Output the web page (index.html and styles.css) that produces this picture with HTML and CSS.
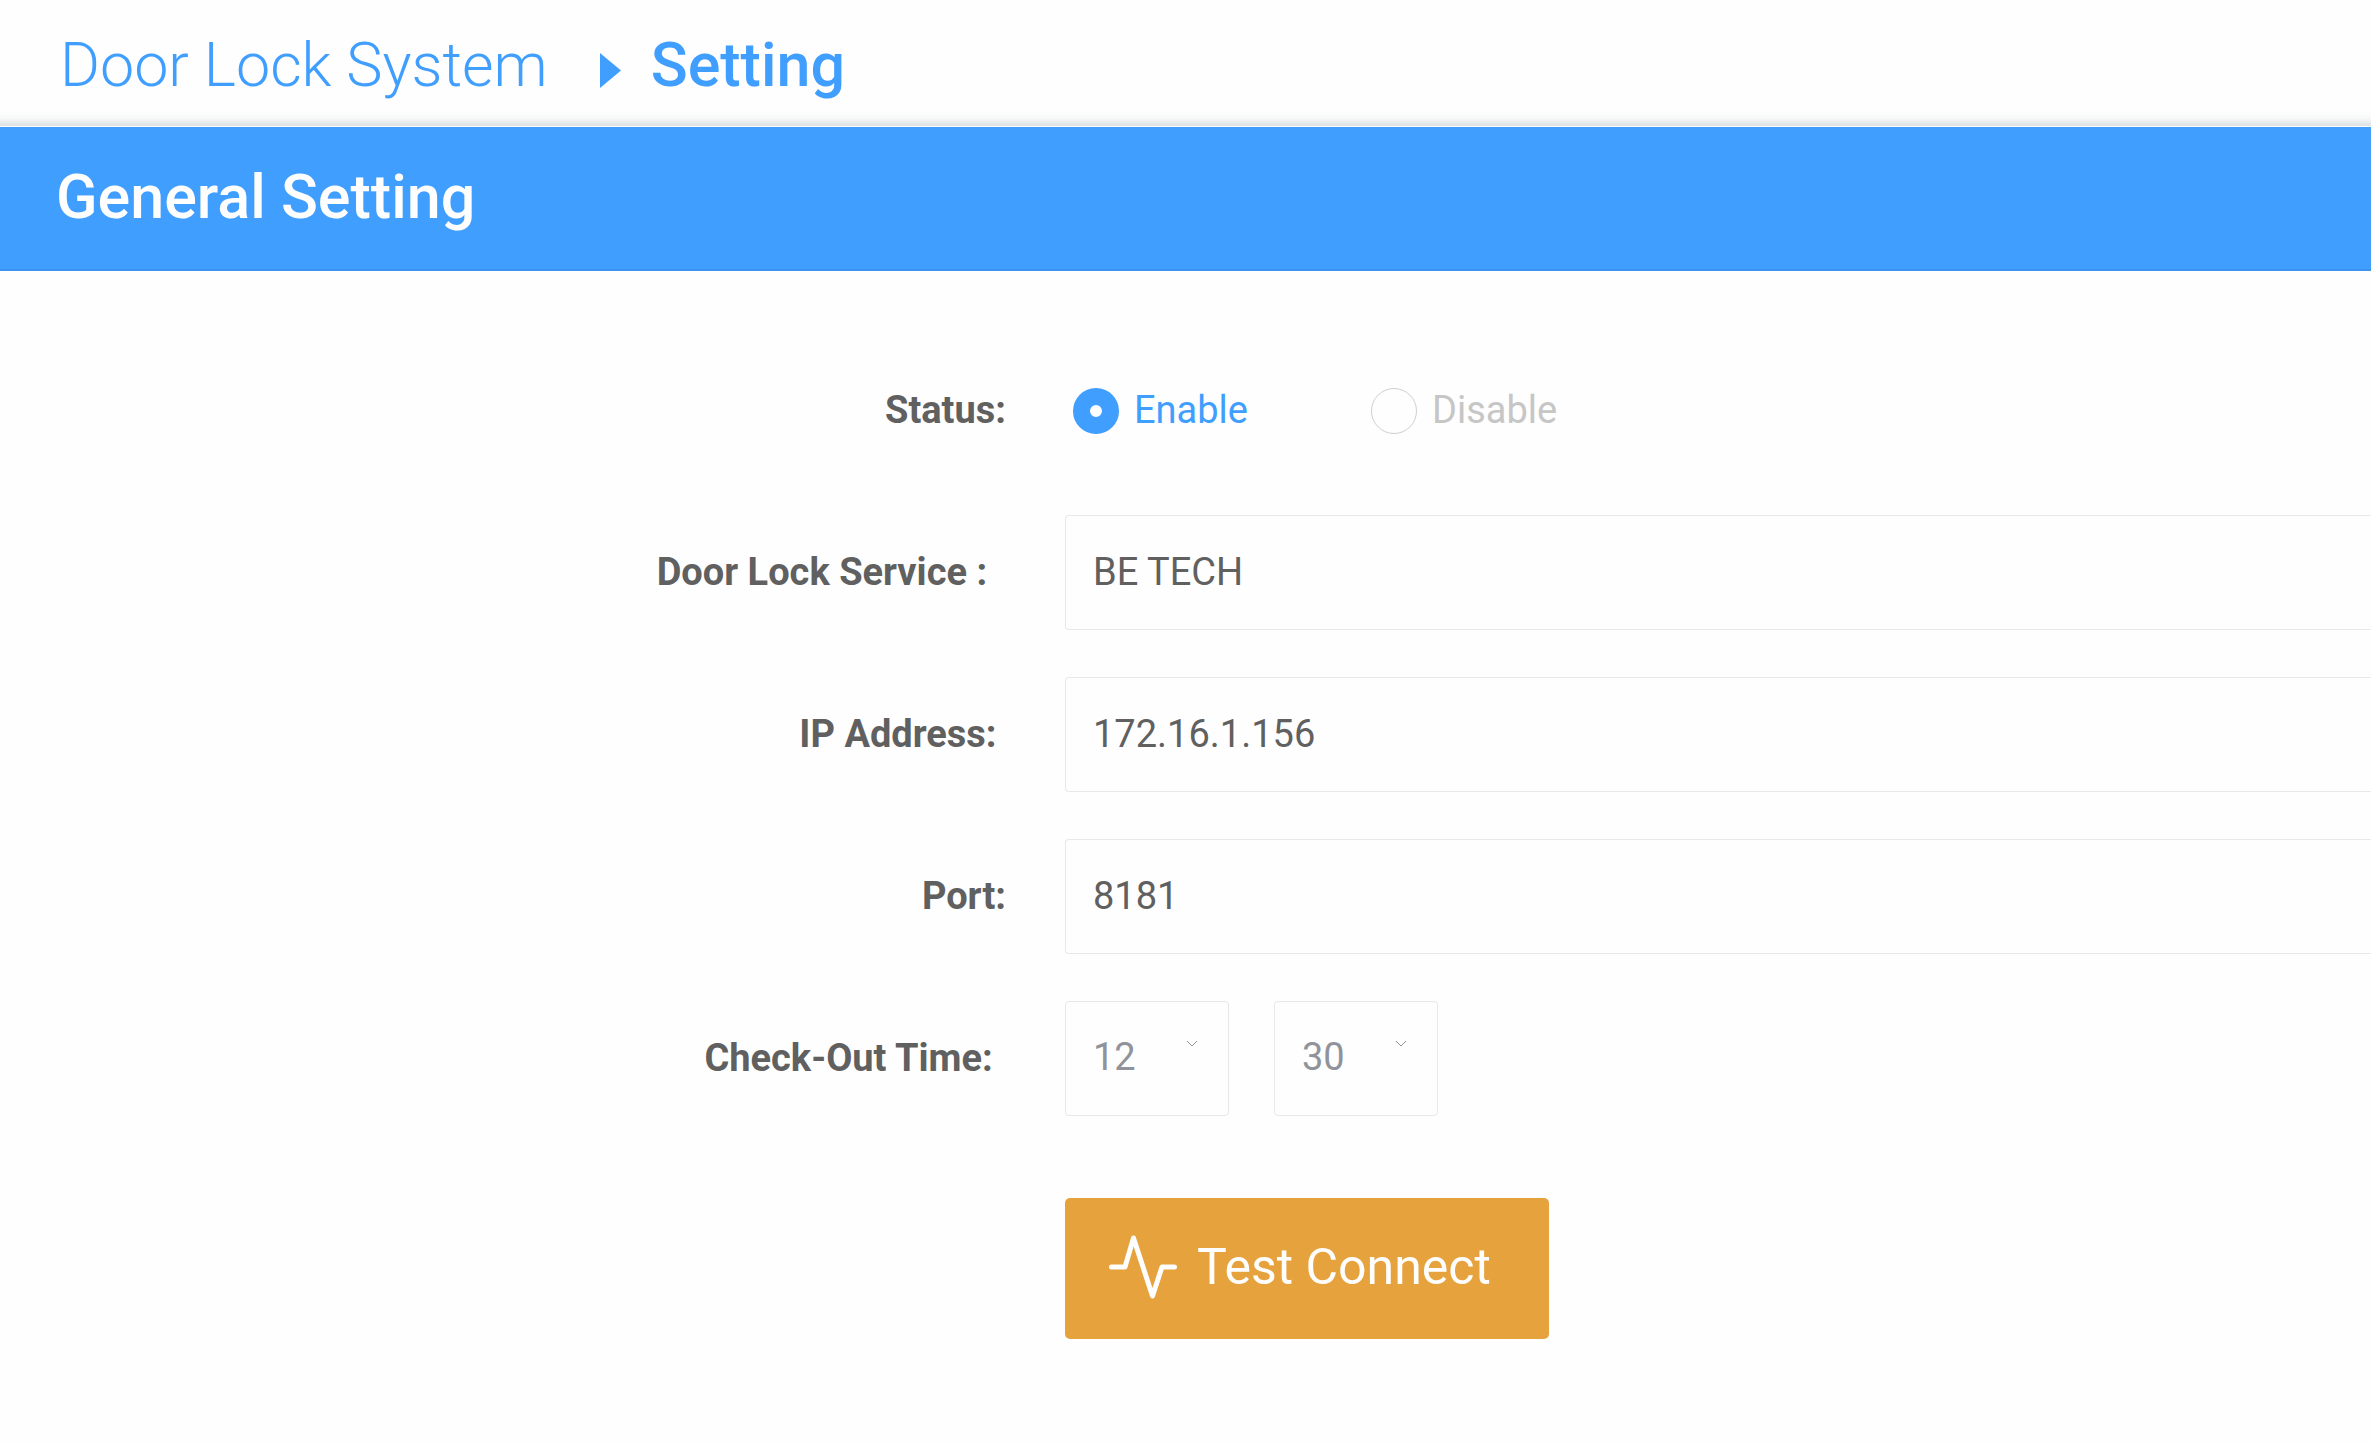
FILE: index.html
```
<!doctype html>
<html lang="en">

<head>
  <meta charset="UTF-8" />
  <meta name="viewport" content="width=device-width, initial-scale=1.0" />
  <title>Door Lock System - Setting</title>
  <link rel="stylesheet" href="styles.css">
</head>

<body>
  <nav class="breadcrumb">
    <a href="#">Door Lock System</a>
    <svg class="arrow" viewBox="0 0 21 35" aria-hidden="true"><path d="M0 0L21 17.5L0 35Z" /></svg>
    <span class="current">Setting</span>
  </nav>

  <h1 class="title-bar">General Setting</h1>

  <form class="setting-form">
    <div class="form-row">
      <span class="form-label" id="status-label">Status:</span>
      <div class="radio-group" role="radiogroup" aria-labelledby="status-label">
        <label class="radio"><input type="radio" name="status" value="enable" checked /><span>Enable</span></label>
        <label class="radio"><input type="radio" name="status" value="disable" /><span>Disable</span></label>
      </div>
    </div>

    <div class="form-row">
      <label class="form-label" for="service">Door Lock Service :&nbsp;&nbsp;</label>
      <input class="field" type="text" id="service" value="BE TECH" />
    </div>

    <div class="form-row">
      <label class="form-label" for="ip">IP Address:&nbsp;</label>
      <input class="field" type="text" id="ip" value="172.16.1.156" />
    </div>

    <div class="form-row">
      <label class="form-label" for="port">Port:</label>
      <input class="field" type="text" id="port" value="8181" />
    </div>

    <div class="form-row">
      <label class="form-label" for="hour">Check-Out Time:&nbsp;&#8202;</label>
      <div class="time-group">
        <div class="select">
          <select id="hour">
            <option>12</option>
          </select>
          <svg class="chevron" viewBox="0 0 12 7" aria-hidden="true"><path d="M1 1L6 6L11 1" /></svg>
        </div>
        <div class="select">
          <select id="minute" aria-label="Check-out minute">
            <option>30</option>
          </select>
          <svg class="chevron" viewBox="0 0 12 7" aria-hidden="true"><path d="M1 1L6 6L11 1" /></svg>
        </div>
      </div>
    </div>

    <div class="form-row form-actions">
      <button class="test-button" type="button">
        <svg viewBox="0 0 68 64" aria-hidden="true"><path d="M2.5 32H16L24.5 3L43.5 61L53 32H65.5" /></svg>
        <span>Test Connect</span>
      </button>
    </div>
  </form>
</body>

</html>
```
FILE: styles.css
```
* {
  box-sizing: border-box;
}

body {
  margin: 0;
  font-family: Roboto, sans-serif;
  font-size: 38px;
  background-color: #fefefe;
  color: #606060;
}

.breadcrumb {
  display: flex;
  align-items: center;
  height: 127px;
  padding: 4px 60px 0;
  border-bottom: 1px solid #fefefe;
  background: linear-gradient(to top, #dde1e4, #f8f9f9 8px, #fefefe 16px);
  font-size: 61px;
  color: #409eff;
}

.breadcrumb a {
  color: #409eff;
  font-weight: 300;
  text-decoration: none;
}

.arrow {
  width: 21px;
  height: 35px;
  margin: 10px 30px 0 52px;
  fill: #409eff;
}

.current {
  font-weight: 500;
}

.title-bar {
  display: flex;
  align-items: center;
  height: 144px;
  margin: 0;
  padding: 0 56px 2px;
  border-bottom: 2px solid #3a94f0;
  background-color: #409eff;
  color: #fefefe;
  font-size: 61px;
  font-weight: 500;
}

.setting-form {
  display: flex;
  flex-direction: column;
  gap: 47px;
  padding: 82px 0;
}

.form-row {
  display: grid;
  grid-template-columns: 1006fr 1306fr;
  column-gap: 59px;
  align-items: center;
  min-height: 115px;
}

.form-label {
  padding-bottom: 1px;
  font-weight: 700;
  text-align: right;
}

.radio-group {
  display: flex;
  gap: 123px;
  padding-left: 8px;
}

.radio {
  display: flex;
  align-items: center;
  gap: 15px;
  color: #c6c6c6;
}

.radio:has(input:checked) {
  color: #409eff;
}

.radio span {
  padding-bottom: 1px;
}

.radio input {
  appearance: none;
  width: 46px;
  height: 46px;
  margin: 0;
  border: 1px solid #cfcfcf;
  border-radius: 50%;
}

.radio input:checked {
  border: 17px solid #409eff;
  background-color: #fefefe;
}

.field,
.select select {
  appearance: none;
  width: 100%;
  height: 115px;
  padding: 0 27px 1px;
  border: 1px solid #e8e8e8;
  border-radius: 4px;
  background-color: #fefefe;
  font: inherit;
  color: #606060;
}

.field {
  border-right: 0;
  border-radius: 4px 0 0 4px;
}

.time-group {
  display: flex;
  gap: 45px;
}

.select {
  position: relative;
  width: 164px;
}

.select select {
  padding-bottom: 4px;
  color: #909399;
}

.chevron {
  position: absolute;
  top: 39px;
  right: 31px;
  width: 12px;
  height: 7px;
  fill: none;
  stroke: #909399;
  pointer-events: none;
}

.form-actions {
  padding-top: 35px;
}

.test-button {
  grid-column: 2;
  justify-self: start;
  display: flex;
  align-items: center;
  gap: 20px;
  height: 141px;
  padding: 0 58px 4px 44px;
  border: 0;
  border-radius: 5px;
  background-color: #e6a23c;
  color: #fefefe;
  font: inherit;
  font-size: 50px;
}

.test-button svg {
  width: 68px;
  height: 64px;
  fill: none;
  stroke: #fefefe;
  stroke-width: 5;
  stroke-linecap: round;
  stroke-linejoin: round;
}
```
